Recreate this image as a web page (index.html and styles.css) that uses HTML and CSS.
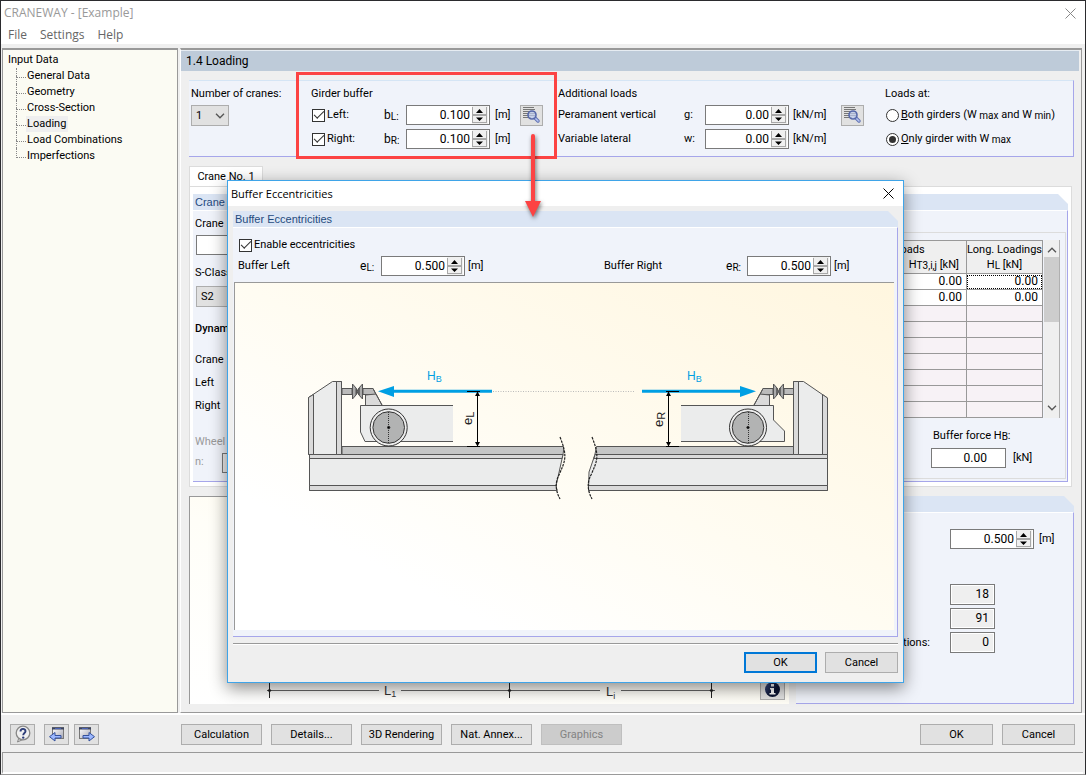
FILE: index.html
```html
<!DOCTYPE html>
<html lang="en">
<head>
<meta charset="utf-8">
<title>CRANEWAY - [Example]</title>
<link rel="stylesheet" href="styles.css">
</head>
<body>
<svg class="defs" aria-hidden="true">
  <defs>
    <symbol id="i-spin" viewBox="0 0 16 18">
      <rect width="16" height="18" fill="#f0f0f0"/>
      <path d="M0.500 1V16M0 8.500H15M0 16.500H15M14.500 1V16" stroke="#a8a8a8" fill="none"/>
      <path d="M1 9.500H14" stroke="#a8a8a8"/>
      <path d="M4 7L7.500 3 11 7ZM4 11.500L7.500 15 11 11.500Z" fill="#000"/>
    </symbol>
    <symbol id="i-detail" viewBox="0 0 21 19">
      <path d="M2 1.500H13M2 3.500H14M2 5.500H14M2 7.500H14M2 9.500H14M2 11.500H10" stroke="#777"/>
      <path d="M14 12L17 15" stroke="#6273b4" stroke-width="3.500" stroke-linecap="round"/>
      <path d="M14 12L17 15" stroke="#b4c3f0" stroke-width="1.500" stroke-linecap="round"/>
      <circle cx="11" cy="9" r="4" fill="#bccaec" fill-opacity=".7" stroke="#5568aa" stroke-width="1.600"/>
    </symbol>
    <symbol id="i-chev" viewBox="0 0 10 6"><path d="M1 .8L5 4.800 9 .8" fill="none" stroke="#555" stroke-width="1.300"/></symbol>
    <linearGradient id="g-page" x1="0" y1="0" x2="1" y2="1"><stop offset="0" stop-color="#fff"/><stop offset="1" stop-color="#a8a8b4"/></linearGradient>
    <linearGradient id="g-info" x1="0" y1="0" x2="1" y2="1"><stop offset="0" stop-color="#3d508d"/><stop offset=".6" stop-color="#0c1533"/></linearGradient>
  </defs>
</svg>
<div class="window">
  <header class="titlebar">
    <span>CRANEWAY - [Example]</span>
    <button class="close" aria-label="Close"><svg viewBox="0 0 11 11" width="11" height="11"><path d="M.5 .5L10.500 10.500M10.500 .5L.5 10.500" stroke="#888" fill="none"/></svg></button>
  </header>
  <nav class="menubar"><button>File</button><button>Settings</button><button>Help</button></nav>

  <div class="main">
    <aside class="tree">
      <a href="#input" class="root">Input Data</a>
      <ul>
        <li><a href="#general">General Data</a></li>
        <li><a href="#geometry">Geometry</a></li>
        <li><a href="#section">Cross-Section</a></li>
        <li><a href="#loading" class="current">Loading</a></li>
        <li><a href="#combinations">Load Combinations</a></li>
        <li><a href="#imperfections">Imperfections</a></li>
      </ul>
    </aside>

    <main class="pane">
      <h1 class="pane-title">1.4 Loading</h1>
      <section class="settings">
        <div class="cranes">
          <label class="head" for="cranes">Number of cranes:</label>
          <span class="select"><select id="cranes"><option>1</option></select><svg width="10" height="6"><use href="#i-chev"/></svg></span>
        </div>
        <div class="girder">
          <h2 class="head">Girder buffer</h2>
          <div class="grid buffer-grid">
            <label class="check"><input type="checkbox" checked>Left:</label>
            <label for="bl" class="sym">b<small>L:</small></label>
            <span class="spin"><input id="bl" value="0.100"><svg width="16" height="18"><use href="#i-spin"/></svg></span>
            <span class="unit">[m]</span>
            <button class="tool small-tool" aria-label="Buffer details"><svg width="21" height="19"><use href="#i-detail"/></svg></button>
            <label class="check"><input type="checkbox" checked>Right:</label>
            <label for="br" class="sym">b<small>R:</small></label>
            <span class="spin"><input id="br" value="0.100"><svg width="16" height="18"><use href="#i-spin"/></svg></span>
            <span class="unit">[m]</span>
          </div>
        </div>
        <div class="additional">
          <h2 class="head">Additional loads</h2>
          <div class="grid load-grid">
            <span>Peramanent vertical</span>
            <label for="g">g:</label>
            <span class="spin"><input id="g" value="0.00"><svg width="16" height="18"><use href="#i-spin"/></svg></span>
            <span class="unit">[kN/m]</span>
            <button class="tool small-tool" aria-label="Load details"><svg width="21" height="19"><use href="#i-detail"/></svg></button>
            <span>Variable lateral</span>
            <label for="w">w:</label>
            <span class="spin"><input id="w" value="0.00"><svg width="16" height="18"><use href="#i-spin"/></svg></span>
            <span class="unit">[kN/m]</span>
          </div>
        </div>
        <div class="loads-at">
          <h2 class="head">Loads at:</h2>
          <div class="grid">
            <label class="check"><input type="radio" name="at"><span><u>B</u>oth girders (W<small> max</small> and W<small> min</small>)</span></label>
            <label class="check"><input type="radio" name="at" checked><span><u>O</u>nly girder with W<small> max</small></span></label>
          </div>
        </div>
      </section>

      <button class="tab">Crane No. 1</button>
      <section class="tab-panel">
        <div class="group crane-group">
          <h3 class="group-title">Crane</h3>
          <div class="group-body crane-body">
            <label for="desc">Crane</label>
            <input id="desc" class="box">
            <label for="sclass" class="s-label">S-Class</label>
            <span class="select"><select id="sclass"><option>S2</option></select></span>
            <strong class="dynamic">Dynamic</strong>
            <span class="line">Crane</span>
            <span class="line">Left</span>
            <span class="line">Right</span>
            <span class="wheel">Wheel</span>
            <span class="wheel-n"><label for="wn">n:</label><input id="wn" class="box" disabled></span>
          </div>
        </div>
        <div class="group load-group">
          <h3 class="group-title"></h3>
          <div class="group-body load-body">
            <div class="frame">
              <div class="table-wrap">
                <table>
                  <thead><tr><th class="c1">Lateral Loads<br><span class="ht">H<small>T3,i,j</small> [kN]</span></th><th class="c2">Long. Loadings<br>H<small>L</small> [kN]</th></tr></thead>
                  <tbody>
                    <tr class="filled"><td>0.00</td><td class="focus">0.00</td></tr>
                    <tr class="filled"><td>0.00</td><td>0.00</td></tr>
                    <tr><td></td><td></td></tr><tr><td></td><td></td></tr><tr><td></td><td></td></tr><tr><td></td><td></td></tr><tr><td></td><td></td></tr><tr><td></td><td></td></tr><tr><td></td><td></td></tr>
                  </tbody>
                </table>
                <div class="scroll"><svg class="up" width="10" height="6"><use href="#i-chev"/></svg><span class="thumb"></span><svg class="down" width="10" height="6"><use href="#i-chev"/></svg></div>
              </div>
              <div class="force">
                <label for="hb">Buffer force H<small>B</small>:</label>
                <div><span class="box force-box"><input id="hb" value="0.00"></span><span>[kN]</span></div>
              </div>
            </div>
          </div>
        </div>
      </section>

      <div class="lower">
        <div class="preview">
          <svg viewBox="190 660 599 43" width="599" height="43">
            <path d="M267 689.500H379M401 689.500H600M621 689.500H715" stroke="#666"/>
            <path d="M269.500 670V697M509.500 670V697M711.500 670V697" stroke="#222"/>
            <path d="M269.500 687.500l2 2-2 2-2-2zM509.500 687.500l2 2-2 2-2-2zM711.500 687.500l2 2-2 2-2-2z" fill="#222"/>
            <text x="384" y="694" class="dim">L<tspan dy="2" font-size="9">1</tspan></text>
            <text x="606" y="695" class="dim">L<tspan dy="3" font-size="9">i</tspan></text>
          </svg>
          <button class="tool info" aria-label="Information"><svg width="17" height="17" viewBox="0 0 17 17"><circle cx="8.500" cy="8.500" r="7.500" fill="url(#g-info)"/><path d="M7 3h3v2.500H7zM6 7h4v5h1.500v1.500H5.500V12H7V8.500H6z" fill="#fff"/></svg></button>
        </div>
        <div class="group result-group">
          <h3 class="group-title"></h3>
          <div class="group-body results">
            <div class="result-row first"><span class="spin"><input aria-label="Distance" value="0.500"><svg width="16" height="18"><use href="#i-spin"/></svg></span><span class="result-unit">[m]</span></div>
            <div class="result-row"><output class="box">18</output></div>
            <div class="result-row"><output class="box">91</output></div>
            <div class="result-row"><span class="result-label">Combinations:</span><output class="box">0</output></div>
          </div>
        </div>
      </div>
    </main>
  </div>

  <footer class="toolbar">
    <div class="tools">
      <button class="tool help" aria-label="Help"><svg width="18" height="18" viewBox="0 0 18 18"><path d="M5 12.500L3.500 17 9 14.500" fill="#ddd" stroke="#888"/><circle cx="9" cy="8" r="6.800" fill="#f0f0f0" stroke="#888" stroke-width="1.300"/><path d="M6.500 6.500C6.500 3 11.500 3 11.500 6.200 11.500 8 9.200 8 9.200 10.200" fill="none" stroke="#2c3c78" stroke-width="1.900"/><circle cx="9.200" cy="12.600" r="1.200" fill="#2c3c78"/></svg></button>
      <button class="tool" aria-label="Previous"><svg width="19" height="17" viewBox="0 0 19 17"><rect x="5.500" y="1.500" width="11" height="11" fill="url(#g-page)" stroke="#777"/><path d="M5 2.500H17" stroke="#3c4560" stroke-width="2"/><path d="M8 2.500H14" stroke="#4a62b5"/><path d="M14 9.500v2.500H8V15L2.500 10.700 8 6.500V9.500Z" fill="#9cb8ff" stroke="#34509c"/></svg></button>
      <button class="tool" aria-label="Next"><svg width="19" height="17" viewBox="0 0 19 17"><rect x="2.500" y="1.500" width="11" height="11" fill="url(#g-page)" stroke="#777"/><path d="M2 2.500H14" stroke="#3c4560" stroke-width="2"/><path d="M5 2.500H11" stroke="#4a62b5"/><path d="M6 9.500v2.500H12V15L17.500 10.700 12 6.500V9.500Z" fill="#9cb8ff" stroke="#34509c"/></svg></button>
    </div>
    <div class="actions">
      <button class="btn">Calculation</button><button class="btn">Details...</button><button class="btn">3D Rendering</button><button class="btn">Nat. Annex...</button><button class="btn" disabled>Graphics</button>
    </div>
    <div class="confirm"><button class="btn">OK</button><button class="btn">Cancel</button></div>
  </footer>
  <div class="status"></div>

  <div class="highlight"></div>

  <div class="dialog" role="dialog" aria-labelledby="dlg-title">
    <header class="dialog-title">
      <span id="dlg-title">Buffer Eccentricities</span>
      <button class="close" aria-label="Close dialog"><svg viewBox="0 0 11 11" width="11" height="11"><path d="M.5 .5L10.500 10.500M10.500 .5L.5 10.500" stroke="#000" fill="none"/></svg></button>
    </header>
    <div class="dialog-body">
      <div class="group">
        <h3 class="group-title">Buffer Eccentricities</h3>
        <div class="group-body ecc-body">
          <label class="check enable"><input type="checkbox" checked>Enable eccentricities</label>
          <div class="ecc">
            <span>Buffer Left</span>
            <label for="el" class="sym">e<small>L:</small></label>
            <span class="spin"><input id="el" value="0.500"><svg width="16" height="18"><use href="#i-spin"/></svg></span>
            <span class="unit">[m]</span>
            <span>Buffer Right</span>
            <label for="er" class="sym">e<small>R:</small></label>
            <span class="spin"><input id="er" value="0.500"><svg width="16" height="18"><use href="#i-spin"/></svg></span>
            <span class="unit">[m]</span>
          </div>
          <div class="drawing">
            <svg viewBox="235 283 659 347" role="img" aria-label="Buffer eccentricity sketch">
              <g stroke="#555" stroke-width="1">
                <path d="M342 446.500H563.500Q564.500 453 560 462H342Z" fill="#c5c6c6"/>
                <path d="M309.500 454.500H563L562 459 556 486 557 490.500H309.500Z" fill="#ebecec"/>
                <path d="M309.500 454.500H563L562 458.500H309.500ZM309.500 485.500H556L557 490.500H309.500Z" fill="#dadada"/>
                <path d="M342 388.500H352V394.500H342ZM363 388.500H373L376 394.500H363Z" fill="#bbb"/>
                <path d="M352.500 384L356 388V395L352.500 399ZM362.500 384L359 388V395L362.500 399ZM356.500 388.500L358 391.500 356.500 394.500ZM359 388L357.500 391.500 359 395Z" fill="#aaa"/>
                <path d="M365.500 395L376 394 382.500 406H365.500Z" fill="#dadada"/>
                <path d="M373 388.500L382.500 406" fill="none"/>
                <path d="M453 405.500H360.500V432L365 441.500H453" fill="#ebecec"/>
                <path d="M308.500 397.500L332.500 381.500H341.500V454.500H308.500Z" fill="#ebecec"/>
                <path d="M308.500 397.500L313.500 394.500V454.500H308.500ZM336.500 381.500H341.500V454.500H336.500Z" fill="#dadada"/>

                <path d="M794 446.500H596.500Q595 455 593 462H794Z" fill="#c5c6c6"/>
                <path d="M827.500 454.500H595L589 472 588.500 490.500H827.500Z" fill="#ebecec"/>
                <path d="M827.500 454.500H595L594 458.500H827.500ZM827.500 485.500H588.500V490.500H827.500Z" fill="#dadada"/>
                <path d="M794 388.500H784V394.500H794ZM773 388.500H763L760 394.500H773Z" fill="#bbb"/>
                <path d="M783.500 384L780 388V395L783.500 399ZM773.500 384L777 388V395L773.500 399ZM777 388L778.500 391.500 777 395ZM780 388L778.500 391.500 780 395Z" fill="#aaa"/>
                <path d="M769.500 395L760 394 753.500 406H769.500Z" fill="#dadada"/>
                <path d="M763 388.500L753.500 406" fill="none"/>
                <path d="M681 405.500H773.500V420L784.500 431V441.500H681" fill="#ebecec"/>
                <path d="M827.500 398L803.500 381.500H793.500V454.500H827.500Z" fill="#ebecec"/>
                <path d="M827.500 398L822.500 394.500V454.500H827.500ZM793.500 381.500H798.500V454.500H793.500Z" fill="#dadada"/>
              </g>
              <g stroke="#333">
                <circle cx="388.700" cy="427.500" r="18.500" fill="#eee"/><circle cx="388.700" cy="427.500" r="15.800" fill="#b2b3b3"/>
                <circle cx="748" cy="427.500" r="18.500" fill="#eee"/><circle cx="748" cy="427.500" r="15.800" fill="#b2b3b3"/>
                <path d="M388.500 412V443M748.500 412V443" stroke-dasharray="1 1"/>
                <circle cx="388.700" cy="427.500" r="1.200"/><circle cx="748" cy="427.500" r="1.200"/>
              </g>
              <path d="M560 437C568 457 565 461 559 475Q553 486 560 499M592 437C600 457 597 461 591 475Q585 486 592 499" fill="none" stroke="#222" stroke-width="1.200" stroke-dasharray="2.500 1"/>
              <path d="M493 391.500H635" stroke="#bbb" stroke-dasharray="1 1.500"/>
              <path d="M392 391.300H492M642 391.300H742" stroke="#009fe3" stroke-width="3"/>
              <path d="M378 391.300L394 386V397ZM756 391.300L740 386V397Z" fill="#009fe3"/>
              <path d="M477.500 392V446M467 391.500H480M467 446.500H480M668.500 392V446M666 391.500H679M666 446.500H679" stroke="#000"/>
              <path d="M475 396L477.500 391.500 480 396ZM475 442L477.500 446.500 480 442ZM666 396L668.500 391.500 671 396ZM666 442L668.500 446.500 671 442Z" fill="#000"/>
              <text x="427" y="380" class="force-text">H<tspan dy="2" font-size="9">B</tspan></text>
              <text x="687" y="380" class="force-text">H<tspan dy="2" font-size="9">B</tspan></text>
              <text transform="translate(472 425) rotate(-90)" class="ecc-text">e<tspan dy="2" font-size="11">L</tspan></text>
              <text transform="translate(663 427) rotate(-90)" class="ecc-text">e<tspan dy="2" font-size="11">R</tspan></text>
            </svg>
          </div>
        </div>
      </div>
      <div class="dialog-actions"><button class="btn primary">OK</button><button class="btn">Cancel</button></div>
    </div>
  </div>

  <svg class="pointer" width="30" height="100" viewBox="0 0 30 100" aria-hidden="true"><path d="M15 6V74" stroke="#fc4343" stroke-width="4" stroke-linecap="round"/><path d="M7 71H23L15 87Z" fill="#fc4343"/></svg>
</div>
</body>
</html>
```

FILE: styles.css
```css
* { box-sizing: border-box; }
body { margin: 0; background: #efefef; color: #000; font: 11px/16px Roboto, "Noto Sans", sans-serif; }
button, input, select { font: inherit; color: inherit; margin: 0; padding: 0; border-radius: 0; }
h1, h2, h3, ul { margin: 0; padding: 0; font: inherit; }
small { font-size: 10px; line-height: 1; position: relative; top: 1px; }
svg { display: block; flex: none; }
.defs { position: absolute; width: 0; height: 0; }

.window { position: relative; display: flex; flex-direction: column; min-height: 100vh; border: 1px solid #2b2b2e; border-bottom-color: #9a9a9a; background: #efefef; }
.titlebar { display: flex; justify-content: space-between; align-items: center; height: 24px; padding: 0 9px 0 3px; background: #fff; color: #999; font: 12px/16px "Open Sans", "Noto Sans", sans-serif; }
.close { border: 0; background: none; }
.menubar { display: flex; gap: 13px; height: 19px; padding: 0 7px; background: #fff; font: 12px/16px "Open Sans", "Noto Sans", sans-serif; }
.menubar button { border: 0; background: none; color: #666; line-height: 20px; }

.main { flex: 1; display: flex; gap: 2px; margin-top: 4px; padding: 0 3px 0 1px; }
.tree { width: 176px; flex: none; padding: 2px 5px; border: 1px solid #999; border-top-width: 2px; background: #fbfbf3; }
.tree a { color: #000; text-decoration: none; }
.tree ul { list-style: none; margin-left: 8px; }
.tree .root { display: block; }
.tree li { position: relative; height: 16px; padding-left: 10px; }
.tree li::before { content: ""; position: absolute; left: 0; top: 0; width: 9px; height: 9px; border-left: 1px dotted #888; border-bottom: 1px dotted #888; }
.tree li:not(:last-child)::after { content: ""; position: absolute; left: 0; top: 8px; height: 8px; border-left: 1px dotted #888; }
.tree li a { display: inline-block; padding: 0 2px 0 1px; }
.tree .current { background: #efefef; }

.pane { flex: 1; min-width: 0; display: flex; flex-direction: column; border: 1px solid #999; border-left-color: #fff; border-top-width: 2px; }
.pane-title { height: 21px; margin: 0 2px 0 0; padding: 0 5px; background: #becbd9; font-size: 12px; line-height: 20px; border-top: 1px solid #e6ecf2; }
.settings { display: grid; grid-template-columns: 120px 247px 327px 1fr; height: 77px; margin: 9px 7px 0 8px; padding: 5px 0 0 2px; background: #f0f3fa; border: solid #a6a6ea; border-width: 1px 1px 1px 0; border-top-color: #d5e5f5; }
.head { display: block; line-height: 16px; margin-bottom: 3px; white-space: nowrap; }
.grid { display: grid; row-gap: 4px; grid-auto-rows: 20px; align-items: center; white-space: nowrap; }
.buffer-grid { grid-template-columns: 73px 22px 89px 25px 23px; }
.load-grid { grid-template-columns: 126px 21px 88px 48px 23px; }
.small-tool { width: 23px; height: 21px; }
.grid .small-tool { grid-column: 5; }
.sym { font-size: 12px; }

.check { display: flex; align-items: center; gap: 2px; padding: 1px; white-space: nowrap; }
.check input { appearance: none; flex: none; width: 13px; height: 13px; border: 1px solid #333; background: #fff; display: grid; place-items: center; }
.check input[type=checkbox]:checked::after { content: ""; width: 9px; height: 4px; margin-bottom: 3px; border: solid #333; border-width: 0 0 1px 1px; transform: rotate(-45deg); }
.check input[type=radio] { border-radius: 50%; }
.check input[type=radio]:checked::after { content: ""; width: 7px; height: 7px; border-radius: 50%; background: #333; }

.select { position: relative; display: flex; align-items: center; width: 38px; height: 21px; }
.select select { appearance: none; width: 100%; height: 100%; padding: 0 4px; border: 1px solid #adadad; background: #e1e1e1; }
.select svg { position: absolute; right: 4px; }
.spin { display: flex; align-items: center; width: 84px; height: 20px; padding-right: 1px; border: 1px solid #7a7a7a; background: #fff; }
.spin input { flex: 1; min-width: 0; height: 100%; padding: 0 2px; border: 0; background: none; text-align: right; }
.spin input, .force-box input, .results output, td { font-size: 12px; }
.box { height: 20px; border: 1px solid #7a7a7a; background: #fff; }
.tool { display: grid; place-items: center; border: 1px solid #adadad; background: #e1e1e1; }
.btn { height: 21px; border: 1px solid #adadad; background: #e1e1e1; line-height: 19px; }
.btn:disabled { background: #ccc; border-color: #bfbfbf; color: #838383; }

.tab { align-self: flex-start; width: 74px; height: 20px; margin: 9px 0 0 8px; border: 1px solid #dcdcdc; border-bottom: 0; background: #fff; white-space: nowrap; }
.tab-panel { display: flex; gap: 8px; height: 301px; margin: 0 9px 0 8px; padding: 7px 3px 4px; border: 1px solid #dcdcdc; background: #fff; }
.group { display: flex; flex-direction: column; min-width: 0; }
.group-title { height: 16px; padding: 0 2px; background: #dbe5f4; color: #1f4b80; line-height: 16px; clip-path: polygon(0 0, calc(100% - 10px) 0, 100% 10px, 100% 100%, 0 100%); font-family: "Liberation Sans", Arial, sans-serif; }
.group-body { flex: 1; border: solid #a6a6ea; border-width: 1px 1px 1px 0; border-top-color: #fff; background: #f0f3fa; }
.crane-group { flex: 1; }
.load-group { flex: 1; }
.crane-body { display: flex; flex-direction: column; align-items: flex-start; padding: 5px 2px; }
.crane-body .box { width: 180px; margin: 3px 0 9px 1px; }
.crane-body .select { width: 90px; margin: 5px 0 0 1px; }
.s-label { line-height: 17px; }
.dynamic { margin: 14px 0 11px; font-weight: 500; }
.line { line-height: 23px; }
.wheel { margin-top: 17px; color: #9a9a9a; }
.wheel-n { display: flex; align-items: center; gap: 18px; color: #9a9a9a; }
.wheel-n .box { width: 80px; margin: 3px 0 0; background: #efefef; }
.load-body { padding: 21px 1px 2px 4px; }
.frame { height: 100%; padding: 7px 5px 4px; border: 1px solid #dcdcdc; }
.table-wrap { display: flex; justify-content: flex-end; gap: 1px; }
table { border-collapse: collapse; border: 1px solid #999; }
th, td { padding: 0 4px; border: 1px solid #999; font-weight: 400; white-space: nowrap; }
th { height: 33px; padding: 0; background: #efefef; line-height: 15px; }
.c1 { width: 150px; }
.ht { display: block; padding-right: 7px; text-align: right; }
.c2 { width: 75px; }
td { height: 16px; line-height: 15px; background: #f7f2f6; text-align: right; }
.filled td { background: #fff; }
td.focus { outline: 1px dotted #000; outline-offset: -2px; }
.scroll { display: flex; flex-direction: column; align-items: center; width: 16px; padding: 7px 0; border-right: 1px solid #b0b0b0; background: #efefef; }
.scroll .up { transform: rotate(180deg); margin-bottom: 4px; }
.thumb { width: 15px; height: 65px; background: #cdcdcd; }
.scroll .down { margin-top: auto; }
.force { display: flex; flex-direction: column; align-items: flex-end; margin-top: 10px; }
.force label { width: 127px; }
.force div { display: flex; align-items: center; gap: 7px; width: 129px; margin-top: 4px; }
.force-box { display: flex; width: 75px; background: #fff; padding-right: 18px; }
.force-box input { width: 100%; border: 0; background: none; text-align: right; }

.lower { flex: 1; display: flex; gap: 7px; margin: 9px 7px 8px 8px; min-height: 208px; }
.preview { position: relative; flex: 1; display: flex; align-items: flex-end; overflow: hidden; border: solid #999; border-width: 1px 0 0 1px; background: linear-gradient(to top right, #fff, #fffef8 45%, #fff6df); }
.info { position: absolute; right: 4px; bottom: 4px; width: 25px; height: 21px; }
.dim { font: 13px "Liberation Sans", Arial, sans-serif; fill: #333; }
.result-group { width: 278px; }
.results { padding: 16px 18px 0 0; display: flex; flex-direction: column; }
.result-row { display: flex; gap: 20px; align-items: center; justify-content: flex-end; margin-bottom: 3px; }
.result-row.first { gap: 5px; margin-bottom: 35px; }
.result-unit { width: 16px; }
.results output { width: 45px; height: 21px; margin-right: 60px; padding-right: 5px; border-color: #7a7a7a; background: #efefef; box-shadow: inset 0 0 0 1px #fff; line-height: 19px; text-align: right; }

.toolbar { display: flex; align-items: center; height: 39px; padding: 1px 10px 0 9px; border-top: 2px solid #fff; }
.tools { display: flex; gap: 5px; width: 171px; }
.tools .tool { width: 25px; height: 21px; }
.help { margin-right: 4px; }
.actions { display: flex; gap: 9px; }
.actions .btn { width: 81px; }
.confirm { display: flex; gap: 9px; margin-left: auto; }
.confirm .btn, .dialog-actions .btn { width: 73px; }
.status { height: 22px; margin: 0 2px 0 1px; border: 1px solid #999; border-width: 1px 0 0 1px; border-bottom: 2px solid #fff; }

.highlight { position: absolute; left: 295px; top: 71px; width: 261px; height: 87px; border: 3px solid #fc4343; }
.pointer { position: absolute; left: 517px; top: 129px; filter: drop-shadow(1px 2px 2px #0008); }

.dialog { position: absolute; left: 226px; right: 181px; top: 179px; border: 1px solid #3fa4e8; background: #efefef; box-shadow: 0 5px 16px #0007; }
.dialog-title { display: flex; justify-content: space-between; align-items: center; height: 25px; padding: 0 9px 0 3px; background: #fff; font: 11px/16px "Open Sans", "Noto Sans", sans-serif; }
.dialog-body { padding: 5px 5px 9px; }
.ecc-body { padding: 8px 3px 6px 1px; }
.enable { height: 18px; padding: 0 5px; }
.ecc { display: grid; grid-template-columns: 122px 21px 87px 136px 122px 21px 87px 1fr; align-items: center; margin: 2px 0 6px; padding-left: 4px; }
.drawing { border: solid #999; border-width: 1px 0 0 1px; background: linear-gradient(to top right, #fff 20%, #fffcf2 50%, #fff6df); }
.drawing svg { width: 100%; height: 347px; }
.force-text { font: 12px "Liberation Sans", Arial, sans-serif; fill: #009fe3; }
.ecc-text { font: 13px "Liberation Sans", Arial, sans-serif; fill: #222; }
.dialog-actions { display: flex; justify-content: flex-end; gap: 8px; margin-top: 6px; padding-top: 8px; border-top: 1px solid #999; box-shadow: inset 0 1px #fff; }
.dialog-actions .primary { border: 2px solid #0078d7; line-height: 17px; }
```
